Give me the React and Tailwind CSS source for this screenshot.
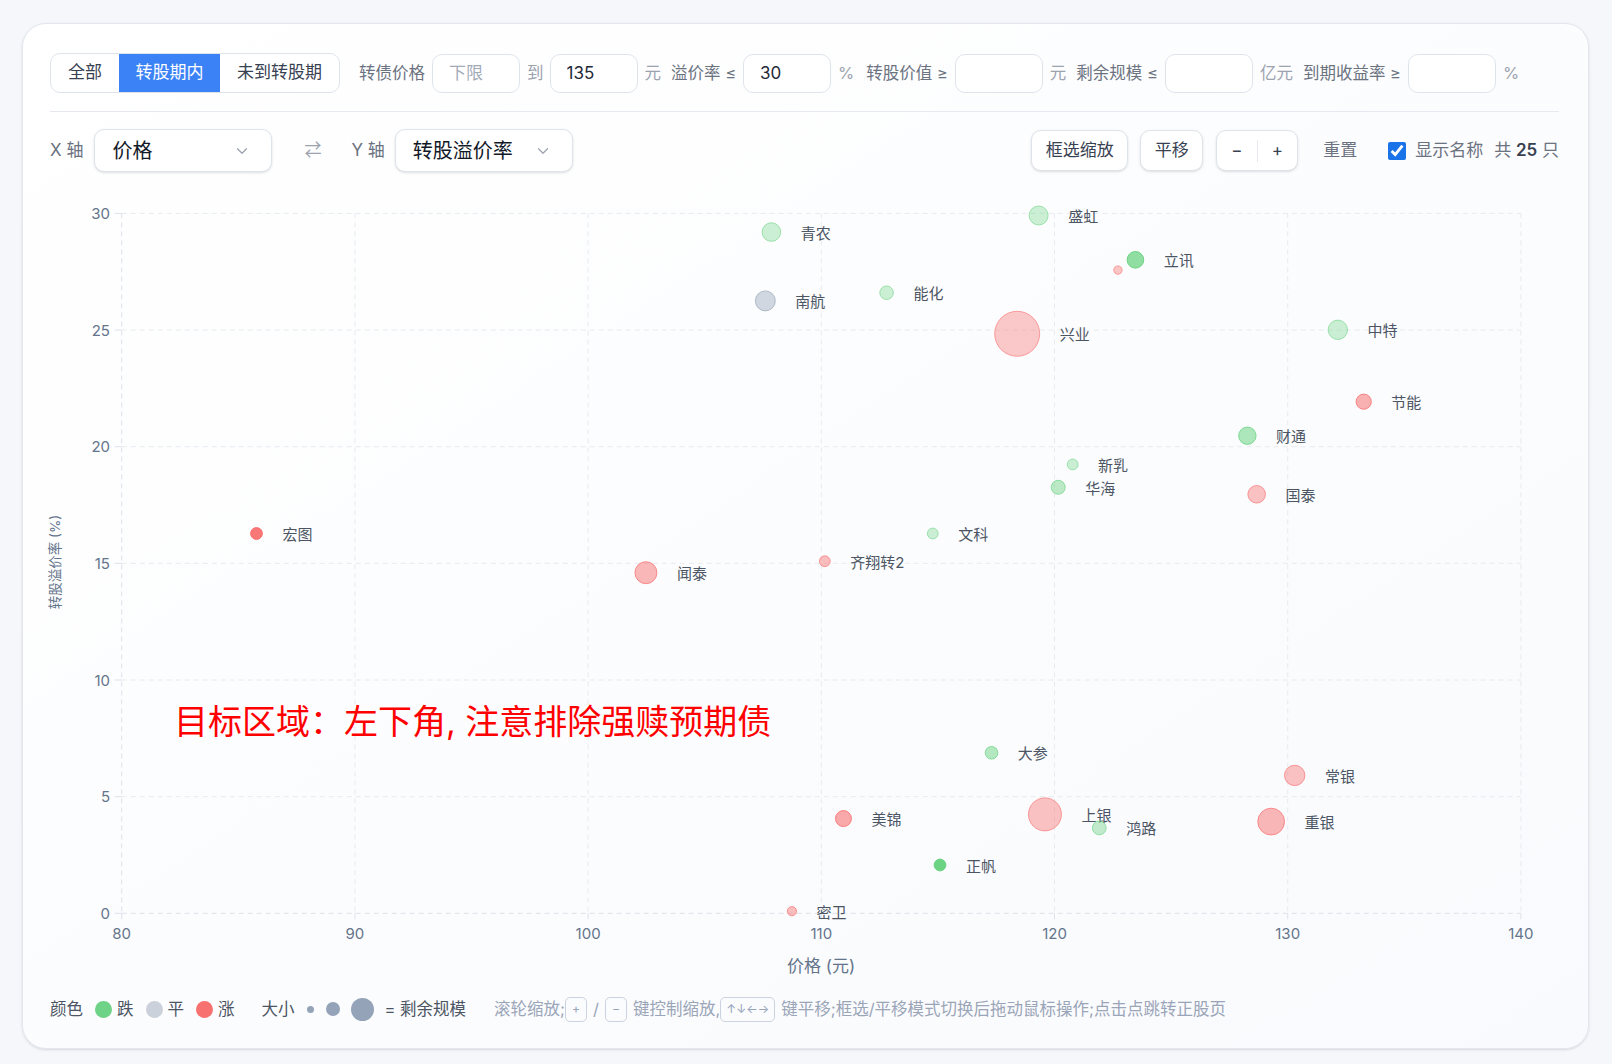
import { ChevronDown } from 'lucide-react';

// plot scale (svg coords, origin at content top-left of the chart block)
const X0 = 71.7;
const Y1 = 724.3;
const KX = 23.32;
const KY = 23.33;
const sx = (v) => X0 + (v - 80) * KX;
const sy = (v) => Y1 - v * KY;

const COLORS = { up: '#f87171', down: '#6cd383', flat: '#94a3b8' };

const bonds = [
  { name: '青农', x: 107.86, y: 29.2, r: 9.3, c: 'down', o: 0.35 },
  { name: '盛虹', x: 119.32, y: 29.91, r: 9.5, c: 'down', o: 0.35 },
  { name: '立讯', x: 123.47, y: 28.01, r: 8.3, c: 'down', o: 0.75 },
  { name: '', x: 122.72, y: 27.57, r: 4.2, c: 'up', o: 0.4 },
  { name: '南航', x: 107.6, y: 26.25, r: 10, c: 'flat', o: 0.42 },
  { name: '能化', x: 112.8, y: 26.6, r: 6.8, c: 'down', o: 0.35 },
  { name: '兴业', x: 118.4, y: 24.84, r: 22.5, c: 'up', o: 0.38 },
  { name: '中特', x: 132.15, y: 25.01, r: 9.7, c: 'down', o: 0.35 },
  { name: '节能', x: 133.26, y: 21.93, r: 7.6, c: 'up', o: 0.55 },
  { name: '财通', x: 128.27, y: 20.47, r: 8.7, c: 'down', o: 0.55 },
  { name: '新乳', x: 120.78, y: 19.24, r: 5.4, c: 'down', o: 0.35 },
  { name: '华海', x: 120.16, y: 18.26, r: 7, c: 'down', o: 0.45 },
  { name: '国泰', x: 128.67, y: 17.96, r: 8.8, c: 'up', o: 0.42 },
  { name: '宏图', x: 85.78, y: 16.28, r: 5.9, c: 'up', o: 0.95 },
  { name: '文科', x: 114.78, y: 16.28, r: 5.4, c: 'down', o: 0.35 },
  { name: '齐翔转2', x: 110.15, y: 15.09, r: 5.4, c: 'up', o: 0.45 },
  { name: '闻泰', x: 102.48, y: 14.6, r: 11, c: 'up', o: 0.5 },
  { name: '大参', x: 117.3, y: 6.88, r: 6.3, c: 'down', o: 0.5 },
  { name: '常银', x: 130.3, y: 5.91, r: 10.2, c: 'up', o: 0.42 },
  { name: '美锦', x: 110.95, y: 4.06, r: 8, c: 'up', o: 0.6 },
  { name: '上银', x: 119.59, y: 4.24, r: 16.5, c: 'up', o: 0.42 },
  { name: '鸿路', x: 121.92, y: 3.66, r: 6.9, c: 'down', o: 0.4 },
  { name: '重银', x: 129.29, y: 3.93, r: 13.4, c: 'up', o: 0.5 },
  { name: '正帆', x: 115.09, y: 2.07, r: 5.9, c: 'down', o: 1 },
  { name: '密卫', x: 108.74, y: 0.09, r: 4.6, c: 'up', o: 0.45 },
];

const xTicks = [80, 90, 100, 110, 120, 130, 140];
const yTicks = [0, 5, 10, 15, 20, 25, 30];

function FilterInput({ value, placeholder }) {
  return (
    <input
      defaultValue={value}
      placeholder={placeholder}
      className="h-[39px] w-[88px] rounded-[10px] border border-[#dfe4ec] bg-white px-[16px] text-[17px] text-[#1f2937] outline-none placeholder:text-[#a3abb8]"
    />
  );
}

function AxisSelect({ value, className }) {
  return (
    <div
      className={
        'flex h-[43px] w-[178px] items-center justify-between rounded-[10px] border border-[#dfe4ec] bg-white pl-[17px] pr-[20px] shadow-sm ' +
        className
      }
    >
      <span className="text-[20px] text-[#111827]">{value}</span>
      <ChevronDown className="h-[18px] w-[18px] text-[#9ca3af]" strokeWidth={1.6} />
    </div>
  );
}

function Kbd({ children }) {
  return (
    <span className="flex h-[25px] min-w-[22px] items-center justify-center rounded-[5px] border border-[#cbd3df] px-[5px] text-[12px] leading-none text-[#94a3b8]">
      {children}
    </span>
  );
}

function Chart() {
  return (
    <svg width={1509} height={795} className="mt-[17px] block overflow-visible">
      {/* grid */}
      {yTicks.map((t) => (
        <g key={'y' + t}>
          <line x1={X0} x2={sx(140)} y1={sy(t)} y2={sy(t)} stroke={t === 0 ? '#dde1e9' : '#e7eaf0'} strokeDasharray="5 4" />
          <line x1={X0 - 7} x2={X0} y1={sy(t)} y2={sy(t)} stroke="#dde1e9" />
          <text x={60} y={sy(t)} textAnchor="end" dominantBaseline="central" fontSize={15} fill="#64748b">
            {t}
          </text>
        </g>
      ))}
      {xTicks.map((t) => (
        <g key={'x' + t}>
          <line x1={sx(t)} x2={sx(t)} y1={sy(30)} y2={Y1} stroke={t === 80 ? '#dde1e9' : '#e7eaf0'} strokeDasharray="5 4" />
          <line x1={sx(t)} x2={sx(t)} y1={Y1} y2={Y1 + 6} stroke="#dde1e9" />
          <text x={sx(t)} y={744} textAnchor="middle" dominantBaseline="central" fontSize={15} fill="#64748b">
            {t}
          </text>
        </g>
      ))}

      {/* axis titles */}
      <text x={771} y={777} textAnchor="middle" dominantBaseline="central" fontSize={17} fill="#64748b">
        价格 (元)
      </text>
      <text
        transform="translate(5 373) rotate(-90)"
        textAnchor="middle"
        dominantBaseline="central"
        fontSize={13.5}
        fill="#64748b"
      >
        转股溢价率 (%)
      </text>

      {/* bubbles */}
      {bonds.map((b, i) => {
        const cx = sx(b.x);
        const cy = sy(b.y);
        const col = COLORS[b.c];
        return (
          <g key={i}>
            <circle
              cx={cx}
              cy={cy}
              r={b.r}
              fill={col}
              fillOpacity={b.o}
              stroke={col}
              strokeOpacity={Math.min(1, b.o + 0.25)}
              strokeWidth={1}
            />
            {b.name && (
              <text x={cx + b.r + 20} y={cy + 1} dominantBaseline="central" fontSize={15} fill="#4b5563">
                {b.name}
              </text>
            )}
          </g>
        );
      })}

      {/* annotation */}
      <text x={124} y={532} dominantBaseline="central" fontSize={34} fill="#ff0000">
        目标区域：左下角, 注意排除强赎预期债
      </text>
    </svg>
  );
}

export default function App() {
  return (
    <div className="min-h-screen bg-[#f5f7fb] pt-[23px] font-[family-name:Inter,'Noto_Sans_CJK_SC',sans-serif]">
      <div className="ml-[22px] h-[1026px] w-[1567px] rounded-[24px] border border-[#e2e6ee] bg-linear-to-br from-white to-[#f9fafd] pl-[27px] pr-[29px] pt-[29px] shadow-sm">
        {/* filters */}
        <div className="flex h-[40px] items-center text-[16.5px] whitespace-nowrap">
          <div className="flex h-[40px] overflow-hidden rounded-[10px] border border-[#dfe4ec] bg-white text-[17px]">
            <button className="w-[68px] text-[#374151]">全部</button>
            <button className="w-[101px] bg-[#3b82f6] text-white">转股期内</button>
            <button className="w-[119px] text-[#374151]">未到转股期</button>
          </div>
          <span className="ml-[19px] text-[#6b7280]">转债价格</span>
          <span className="ml-[7px]"><FilterInput placeholder="下限" /></span>
          <span className="ml-[7px] text-[#9ca3af]">到</span>
          <span className="ml-[6px]"><FilterInput value="135" /></span>
          <span className="ml-[7px] text-[#9ca3af]">元</span>
          <span className="ml-[10px] text-[#6b7280]">溢价率 ≤</span>
          <span className="ml-[7px]"><FilterInput value="30" /></span>
          <span className="ml-[7px] text-[#9ca3af]">%</span>
          <span className="ml-[12px] text-[#6b7280]">转股价值 ≥</span>
          <span className="ml-[7px]"><FilterInput /></span>
          <span className="ml-[7px] text-[#9ca3af]">元</span>
          <span className="ml-[10px] text-[#6b7280]">剩余规模 ≤</span>
          <span className="ml-[7px]"><FilterInput /></span>
          <span className="ml-[7px] text-[#9ca3af]">亿元</span>
          <span className="ml-[10px] text-[#6b7280]">到期收益率 ≥</span>
          <span className="ml-[7px]"><FilterInput /></span>
          <span className="ml-[7px] text-[#9ca3af]">%</span>
        </div>

        <div className="mt-[18px] border-t border-[#e6e9f0]" />

        {/* axis controls */}
        <div className="mt-[17px] flex h-[43px] items-center text-[17px] whitespace-nowrap">
          <span className="text-[#6b7280]">X 轴</span>
          <AxisSelect value="价格" className="ml-[11px]" />
          <span className="ml-[32px] text-[#9ca3af]">⇄</span>
          <span className="ml-[30px] text-[#6b7280]">Y 轴</span>
          <AxisSelect value="转股溢价率" className="ml-[10px]" />

          <div className="ml-auto flex items-center">
            <button className="h-[41px] w-[97px] rounded-[10px] border border-[#dfe4ec] bg-white text-[#374151] shadow-sm">
              框选缩放
            </button>
            <button className="ml-[12px] h-[41px] w-[63px] rounded-[10px] border border-[#dfe4ec] bg-white text-[#374151] shadow-sm">
              平移
            </button>
            <div className="ml-[13px] flex h-[41px] w-[82px] items-center rounded-[10px] border border-[#dfe4ec] bg-white text-[#374151] shadow-sm">
              <button className="flex-1">−</button>
              <span className="h-[22px] w-px bg-[#e5e8ee]" />
              <button className="flex-1">+</button>
            </div>
            <button className="ml-[25px] text-[#6b7280]">重置</button>
            <label className="ml-[31px] flex items-center gap-[9px] text-[#6b7280]">
              <input type="checkbox" defaultChecked className="h-[18px] w-[18px] accent-[#1a73e8]" />
              显示名称
            </label>
            <span className="ml-[11px] text-[#6b7280]">
              共 <span className="font-semibold text-[#374151]">25</span> 只
            </span>
          </div>
        </div>

        <Chart />

        {/* legend */}
        <div className="mt-[12px] flex h-[26px] items-center text-[16.5px] whitespace-nowrap text-[#4b5563]">
          <span>颜色</span>
          <span className="ml-[12px] h-[17px] w-[17px] rounded-full bg-[#6ed386]" />
          <span className="ml-[5px]">跌</span>
          <span className="ml-[12px] h-[17px] w-[17px] rounded-full bg-[#cbd1da]" />
          <span className="ml-[5px]">平</span>
          <span className="ml-[12px] h-[17px] w-[17px] rounded-full bg-[#f87171]" />
          <span className="ml-[5px]">涨</span>
          <span className="ml-[27px]">大小</span>
          <span className="ml-[12px] h-[7px] w-[7px] rounded-full bg-[#94a3b8]" />
          <span className="ml-[12px] h-[14px] w-[14px] rounded-full bg-[#94a3b8]" />
          <span className="ml-[11px] h-[23px] w-[23px] rounded-full bg-[#94a3b8]" />
          <span className="ml-[11px]">= 剩余规模</span>
          <span className="ml-[28px] flex items-center text-[16.5px] text-[#9aa5b8]">
            滚轮缩放;
            <Kbd>+</Kbd>
            <span className="mx-[6px]">/</span>
            <Kbd>−</Kbd>
            <span className="ml-[6px]">键控制缩放,</span>
            <Kbd>↑↓←→</Kbd>
            <span className="ml-[6px]">键平移;框选/平移模式切换后拖动鼠标操作;点击点跳转正股页</span>
          </span>
        </div>
      </div>
    </div>
  );
}
